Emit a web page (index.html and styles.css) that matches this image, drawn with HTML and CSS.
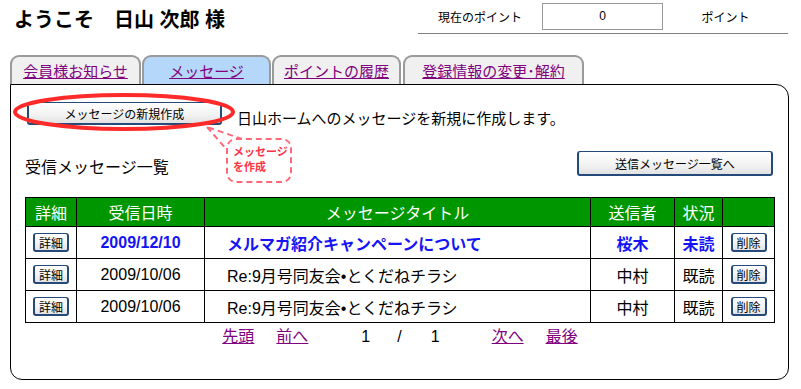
FILE: index.html
```html
<!DOCTYPE html>
<html lang="ja">
<head>
  <meta charset="UTF-8" />
  <title>メッセージ</title>
  <link rel="stylesheet" href="styles.css">
</head>
<body>
  <header class="top">
    <h1 class="welcome">ようこそ　日山 次郎 様</h1>
    <div class="points">
      <span class="points-label">現在のポイント</span>
      <span class="points-box">0</span>
      <span class="points-unit">ポイント</span>
    </div>
  </header>

  <nav class="tabs">
    <a href="#" class="tab tab-news">会員様お知らせ</a>
    <a href="#" class="tab tab-msg active">メッセージ</a>
    <a href="#" class="tab tab-hist">ポイントの履歴</a>
    <a href="#" class="tab tab-reg">登録情報の変更･解約</a>
  </nav>

  <section class="panel">
    <!-- annotation over the new message button -->
    <svg class="mark" width="260" height="80" viewBox="0 0 260 80">
      <path d="M196 42 L217 66 L231 54 Z" fill="#fff" stroke="#ff6878" stroke-width="2" stroke-dasharray="6 4"/>
      <ellipse cx="113" cy="27" rx="109" ry="17" fill="none" stroke="#ff2b2b" stroke-width="4"/>
    </svg>
    <div class="callout">メッセージ<br>を作成</div>

    <div class="new-row">
      <button class="btn btn-new">メッセージの新規作成</button>
      <p class="new-text">日山ホームへのメッセージを新規に作成します。</p>
    </div>

    <div class="list-head">
      <h2 class="list-title">受信メッセージ一覧</h2>
      <button class="btn btn-sent">送信メッセージ一覧へ</button>
    </div>

    <table class="inbox">
      <thead>
        <tr>
          <th class="c-detail">詳細</th>
          <th class="c-date">受信日時</th>
          <th class="c-title">メッセージタイトル</th>
          <th class="c-from">送信者</th>
          <th class="c-state">状況</th>
          <th class="c-del"></th>
        </tr>
      </thead>
      <tbody>
        <tr class="unread">
          <td><button class="btn btn-small">詳細</button></td>
          <td class="center">2009/12/10</td>
          <td>メルマガ紹介キャンペーンについて</td>
          <td class="center">桜木</td>
          <td class="center">未読</td>
          <td><button class="btn btn-small">削除</button></td>
        </tr>
        <tr>
          <td><button class="btn btn-small">詳細</button></td>
          <td class="center">2009/10/06</td>
          <td>Re:9月号同友会•とくだねチラシ</td>
          <td class="center">中村</td>
          <td class="center">既読</td>
          <td><button class="btn btn-small">削除</button></td>
        </tr>
        <tr>
          <td><button class="btn btn-small">詳細</button></td>
          <td class="center">2009/10/06</td>
          <td>Re:9月号同友会•とくだねチラシ</td>
          <td class="center">中村</td>
          <td class="center">既読</td>
          <td><button class="btn btn-small">削除</button></td>
        </tr>
      </tbody>
    </table>

    <div class="pager">
      <a href="#" class="pg-first">先頭</a>
      <a href="#" class="pg-prev">前へ</a>
      <span class="pg-cur">1</span>
      <span class="pg-sep">/</span>
      <span class="pg-total">1</span>
      <a href="#" class="pg-next">次へ</a>
      <a href="#" class="pg-last">最後</a>
    </div>
  </section>
</body>
</html>
```

FILE: styles.css
```css
:root {
  --link: #800080;
  --green: #009600;
  --tab: #f0f0f0;
  --tab-on: #b5d7f9;
  --tab-line: #9a9a9a;
  --navy: #234a78;
  --red: #ff2b2b;
}

* {
  box-sizing: border-box;
  margin: 0;
  padding: 0;
}

body {
  font-family: "Liberation Sans", "Noto Sans CJK JP", sans-serif;
  color: #000;
  background: #fff;
  padding-left: 10px;
}

.top {
  display: flex;
  align-items: center;
  width: 778px;
  height: 34px;
}

.welcome {
  font-size: 20px;
  font-weight: bold;
  padding: 2px 0 0 4px;
}

.points {
  display: flex;
  align-items: center;
  margin-left: auto;
  width: 370px;
  height: 34px;
  border-bottom: 1px solid #808080;
  font-size: 12px;
}

.points-label {
  width: 124px;
  text-align: center;
}

.points-box {
  width: 121px;
  height: 27px;
  line-height: 25px;
  border: 1px solid #999;
  text-align: center;
}

.points-unit {
  flex: 1;
  text-align: center;
}

.tabs {
  display: flex;
  margin-top: 21px;
  height: 29px;
}

.tab {
  display: flex;
  align-items: center;
  justify-content: center;
  height: 29px;
  background: var(--tab);
  border: 2px solid var(--tab-line);
  border-bottom: none;
  border-radius: 9px 9px 0 0;
  color: var(--link);
  font-size: 15px;
  margin-right: 1px;
}

.tab.active {
  background: var(--tab-on);
}

.tab-news { width: 131px; }
.tab-msg { width: 129px; }
.tab-hist { width: 129px; margin-right: 2px; }
.tab-reg { width: 181px; }

.panel {
  position: relative;
  width: 779px;
  height: 296px;
  border: 1px solid #000;
  border-radius: 0 13px 12px 12px;
  padding: 17px 13px 0 14px;
}

.mark {
  position: absolute;
  left: 0;
  top: 0;
}

.callout {
  position: absolute;
  left: 215px;
  top: 53px;
  width: 66px;
  height: 45px;
  border: 2px dashed #ff6878;
  border-radius: 10px;
  background: #fff;
  color: #ff3346;
  font-size: 11px;
  font-weight: bold;
  line-height: 15px;
  white-space: nowrap;
  padding: 5px 0 0 5px;
}

.btn {
  font-family: inherit;
  font-size: 12px;
  color: #000;
  border: 2px solid var(--navy);
  border-top-width: 1px;
  border-radius: 3px;
  background: linear-gradient(#ffffff, #f2f2f2 60%, #e2e2e2);
  cursor: pointer;
}

.new-row {
  display: flex;
  align-items: flex-start;
}

.btn-new {
  width: 195px;
  height: 23px;
  margin-left: 2px;
}

.new-text {
  font-size: 15px;
  line-height: 20px;
  margin: 7px 0 0 15px;
}

.list-head {
  display: flex;
  align-items: flex-start;
  justify-content: space-between;
  margin-top: 22px;
}

.list-title {
  font-size: 16px;
  font-weight: normal;
  line-height: 20px;
  margin-top: 7px;
}

.btn-sent {
  width: 196px;
  height: 25px;
  margin-right: 2px;
}

.inbox {
  width: 750px;
  margin-top: 19px;
  border-collapse: collapse;
  table-layout: fixed;
  font-size: 16px;
}

.inbox th,
.inbox td {
  border: 1px solid #000;
}

.inbox th {
  background: var(--green);
  color: #fff;
  font-weight: normal;
  height: 29px;
}

.inbox td {
  height: 32px;
  padding: 0 0 0 22px;
}

.inbox td:first-child,
.inbox td:last-child {
  padding: 0;
  text-align: center;
}

.inbox td.center {
  padding: 0;
  text-align: center;
}

.c-detail { width: 51px; }
.c-date { width: 128px; }
.c-from { width: 84px; }
.c-state { width: 48px; }
.c-del { width: 52px; }

.unread td {
  color: #1414f5;
  font-weight: bold;
}

.btn-small {
  width: 36px;
  height: 19px;
  font-size: 12px;
  font-weight: normal;
  padding: 0;
}

.pager {
  display: flex;
  justify-content: center;
  width: 750px;
  padding-top: 4px;
  font-size: 16px;
  line-height: 20px;
}

.pager a {
  color: var(--link);
}

.pg-first { margin-right: 22px; }
.pg-prev { margin-right: 53px; }
.pg-cur { margin-right: 27px; }
.pg-sep { margin-right: 29px; }
.pg-total { margin-right: 52px; }
.pg-next { margin-right: 22px; }
```
